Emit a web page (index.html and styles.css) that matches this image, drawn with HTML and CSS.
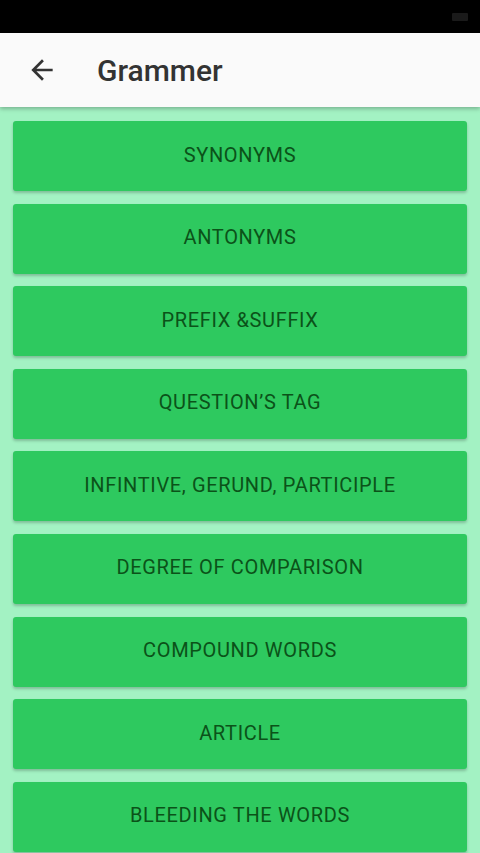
FILE: index.html
```html
<!DOCTYPE html>
<html lang="en">
<head>
  <meta charset="UTF-8">
  <meta name="viewport" content="width=device-width, initial-scale=1.0">
  <title>Grammer</title>
  <link rel="stylesheet" href="styles.css">
</head>
<body>
  <div class="status-bar">
    <span class="battery"></span>
  </div>

  <header class="app-bar">
    <button class="back" aria-label="Back">
      <svg width="24" height="24" viewBox="0 0 24 24">
        <path d="M20 11H7.83l5.59-5.59L12 4l-8 8 8 8 1.41-1.41L7.83 13H20v-2z" fill="#333"/>
      </svg>
    </button>
    <h1>Grammer</h1>
  </header>

  <main class="list">
    <button class="topic">SYNONYMS</button>
    <button class="topic">ANTONYMS</button>
    <button class="topic">PREFIX &amp;SUFFIX</button>
    <button class="topic">QUESTION’S TAG</button>
    <button class="topic">INFINTIVE, GERUND, PARTICIPLE</button>
    <button class="topic">DEGREE OF COMPARISON</button>
    <button class="topic">COMPOUND WORDS</button>
    <button class="topic">ARTICLE</button>
    <button class="topic">BLEEDING THE WORDS</button>
  </main>
</body>
</html>
```

FILE: styles.css
```css
body {
  font-family: Roboto, 'Noto Sans', sans-serif;
  margin: 0;
  padding: 0;
  height: 853px;
  overflow: hidden;
  background: #a3f2c3;
}

.status-bar {
  height: 33px;
  background: #000;
  display: flex;
  justify-content: flex-end;
  align-items: center;
  padding-right: 12px;
}

.battery {
  width: 16px;
  height: 8px;
  background: #1a1a1a;
  border-radius: 1px;
}

.app-bar {
  height: 74px;
  background: #fafafa;
  display: flex;
  align-items: center;
  box-shadow: 0 2px 4px rgba(0, 0, 0, 0.25);
  position: relative;
  z-index: 1;
}

.back {
  width: 56px;
  height: 56px;
  margin-left: 14px;
  border: none;
  background: none;
  padding: 0;
  display: flex;
  align-items: center;
  justify-content: center;
}

.back svg {
  width: 32px;
  height: 32px;
}

h1 {
  margin: 0 0 0 27px;
  font-size: 30px;
  font-weight: 500;
  color: #333;
}

.list {
  display: flex;
  flex-direction: column;
  gap: 12.6px;
  padding: 14px 13px 0;
}

.topic {
  height: 70px;
  flex-shrink: 0;
  border: none;
  border-radius: 3px;
  padding: 0 0 3px;
  background: #2ec95f;
  color: #0b5219;
  font-family: Roboto, 'Noto Sans', sans-serif;
  font-size: 20px;
  letter-spacing: 0.65px;
  box-shadow: 0 2px 3px rgba(0, 0, 0, 0.22);
}
```
